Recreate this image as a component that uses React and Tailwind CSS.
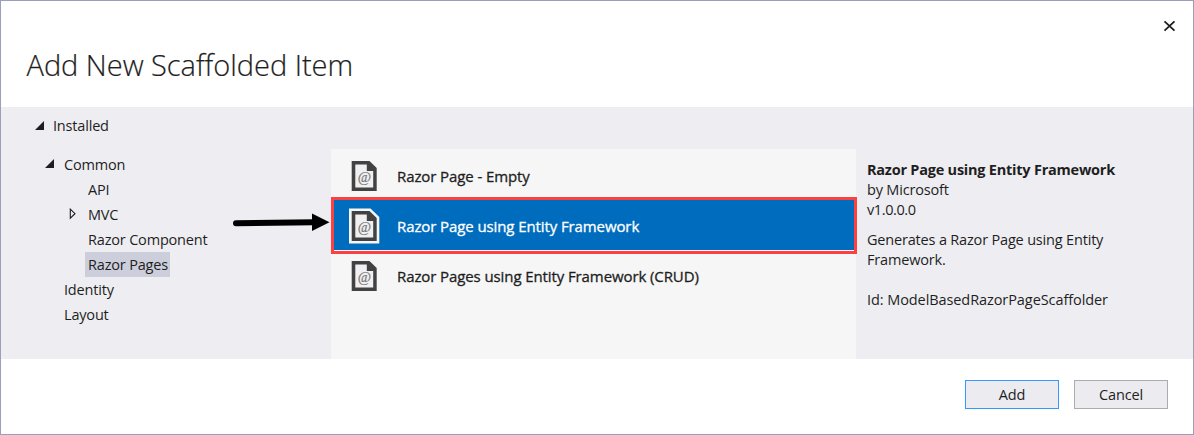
import React from "react";

function PageIcon({ selected }) {
  return (
    <svg width="32" height="36" viewBox="0 0 32 36" className="block shrink-0">
      {selected && <path d="M1 0.5H22.500L31.300 9V35.500H1Z" fill="#f6f6f6" />}
      <path d="M3.700 3H21.500L28.700 10V33H3.700Z" fill="#424242" />
      <path d="M7.300 6.500H18.800V13H25.200V29.500H7.300Z" fill="#f0eff1" />
      <text x="16.300" y="24.400" textAnchor="middle" fontSize="14.5" fill="#777777" stroke="#777777" strokeWidth="0.2" className="font-['Liberation_Serif',serif]">@</text>
    </svg>
  );
}

function Expanded() {
  return (
    <svg width="9" height="9" viewBox="0 0 9 9" className="block shrink-0">
      <path d="M9 0V9H0Z" fill="#1e1e1e" />
    </svg>
  );
}

function Collapsed() {
  return (
    <svg width="7" height="12" viewBox="0 0 7 12" className="block shrink-0">
      <path d="M1.300 1.200L6 5.700L1.300 10.200Z" fill="none" stroke="#1e1e1e" strokeWidth="1.1" />
    </svg>
  );
}

function ListItem({ label, selected }) {
  return (
    <li className={`flex h-[50px] items-center pl-[17px] ${selected ? "bg-[#006cbe] text-white" : "text-[#1e1e1e]"}`}>
      <div className="pt-[2px]">
        <PageIcon selected={selected} />
      </div>
      <span className="ml-[17px] pt-px text-[15px] leading-[20px] tracking-[-0.1px] whitespace-nowrap [-webkit-text-stroke:0.3px_currentColor]">{label}</span>
    </li>
  );
}

export default function App() {
  return (
    <div className="relative flex h-[435px] w-[1194px] flex-col border border-[#9b9fb9] bg-white font-['Open_Sans',sans-serif] text-[14.5px] leading-[20px] tracking-[-0.18px] text-[#1e1e1e]">
      <header className="flex h-[106px] shrink-0 justify-between pr-[17px] pl-[25.5px]">
        <h1 className="mt-[44px] text-[29px] leading-[40px] font-light tracking-[-0.03px] whitespace-nowrap [-webkit-text-stroke:0.2px_currentColor]">Add New Scaffolded Item</h1>
        <button aria-label="Close" className="mt-[19px] h-[12px] w-[13px]">
          <svg width="13" height="12" viewBox="0 0 13 12" className="block">
            <path d="M1.5 1.3L11.5 10.7M11.5 1.3L1.5 10.7" stroke="#1e1e1e" strokeWidth="1.8" />
          </svg>
        </button>
      </header>

      <main className="flex h-[252px] shrink-0 bg-[#eeeef2]">
        <nav className="w-[330px] shrink-0 pt-[6px] whitespace-nowrap">
          <div className="flex h-[25px] items-center pl-[34px]">
            <Expanded />
            <span className="ml-[9px]">Installed</span>
          </div>
          <div className="mt-[14px] flex h-[25px] items-center pl-[44px]">
            <div className="pb-[2px]">
              <Expanded />
            </div>
            <span className="ml-[10px]">Common</span>
          </div>
          <div className="flex h-[25px] items-center pl-[87px]">API</div>
          <div className="flex h-[25px] items-center pl-[68px]">
            <div className="pb-[2px]">
              <Collapsed />
            </div>
            <span className="ml-[12px]">MVC</span>
          </div>
          <div className="flex h-[25px] items-center pl-[87px]">Razor Component</div>
          <div className="ml-[84px] flex h-[25px] w-[85px] items-center bg-[#cccedb] pl-[3px]">Razor Pages</div>
          <div className="flex h-[25px] items-center pl-[63px]">Identity</div>
          <div className="flex h-[25px] items-center pl-[63px]">Layout</div>
        </nav>

        <ul className="mt-[42px] w-[525px] shrink-0 bg-[#f6f6f6] pt-px">
          <ListItem label="Razor Page - Empty" />
          <ListItem label="Razor Page using Entity Framework" selected />
          <ListItem label="Razor Pages using Entity Framework (CRUD)" />
        </ul>

        <aside className="pt-[53px] pl-[11px] whitespace-nowrap">
          <p className="font-bold tracking-[-0.23px]">Razor Page using Entity Framework</p>
          <p>by Microsoft</p>
          <p className="tracking-[-0.4px]">v1.0.0.0</p>
          <p className="mt-[10px]">Generates a Razor Page using Entity<br />Framework.</p>
          <p className="mt-[20px] tracking-[-0.08px]">Id: ModelBasedRazorPageScaffolder</p>
        </aside>
      </main>

      <footer className="flex justify-end gap-[15px] pt-[21px] pr-[25px]">
        <button className="h-[29px] w-[94px] border border-[#3399ff] bg-[#ececf0] pt-px tracking-[-0.17px]">Add</button>
        <button className="h-[29px] w-[94px] border border-[#acacac] bg-[#ececf0] pt-px tracking-[-0.17px]">Cancel</button>
      </footer>

      <div className="pointer-events-none absolute top-[196px] left-[330px] h-[57px] w-[526px] border-[3px] border-[#fb4142]">
        <div className="absolute inset-x-0 bottom-0 h-px bg-[#f6f6f6]" />
      </div>
      <svg className="pointer-events-none absolute top-[211px] left-[231px]" width="100" height="22" viewBox="0 0 100 22">
        <path d="M4 11.2L82 10.2" stroke="#000" strokeWidth="6" strokeLinecap="round" />
        <path d="M80 1.5L97.500 10.200L80 19Z" fill="#000" />
      </svg>
    </div>
  );
}
